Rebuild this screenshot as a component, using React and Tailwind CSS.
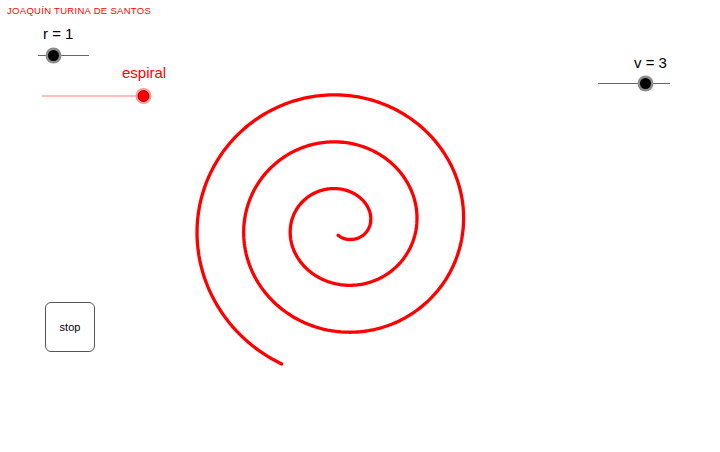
import React from "react";

function spiralPath() {
  const cx = 342, cy = 225.3;
  const pts = [];
  const start = -1.85, end = 16.875;
  const n = 900;
  for (let i = 0; i <= n; i++) {
    const t = start + ((end - start) * i) / n;
    const rx = 27.9 + 7.44 * t;
    const ry = 24.2 + 7.5 * t;
    const x = cx + rx * Math.cos(t);
    const y = cy - ry * Math.sin(t);
    pts.push(`${x.toFixed(2)},${y.toFixed(2)}`);
  }
  return "M" + pts.join(" L");
}

export default function App() {
  const d = spiralPath();
  return (
    <div className="relative w-[720px] h-[452px] bg-white overflow-hidden" style={{ fontFamily: '"Liberation Sans", Arial, sans-serif' }}>
      <svg className="absolute left-0 top-0" width="720" height="452" viewBox="0 0 720 452">
        {/* r slider */}
        <line x1="38" y1="55.5" x2="89" y2="55.5" stroke="#666666" strokeWidth="1" />
        <circle cx="53.5" cy="55.5" r="8" fill="#8c8c8c" />
        <circle cx="53.5" cy="55.5" r="5.5" fill="#000000" />
        {/* espiral slider */}
        <line x1="42" y1="96" x2="143" y2="96" stroke="#ff8080" strokeWidth="1.2" />
        <circle cx="143.5" cy="96" r="8" fill="#ff9a9a" />
        <circle cx="143.5" cy="96" r="5.5" fill="#ff0000" stroke="#7a0000" strokeWidth="0.8" />
        {/* v slider */}
        <line x1="598" y1="83.5" x2="670" y2="83.5" stroke="#666666" strokeWidth="1" />
        <circle cx="645.5" cy="83.5" r="8" fill="#8c8c8c" />
        <circle cx="645.5" cy="83.5" r="5.5" fill="#000000" />
        {/* spiral */}
        <path d={d} fill="none" stroke="#ff0000" strokeWidth="3.3" strokeLinecap="round" strokeLinejoin="round" />
      </svg>

      <div className="absolute left-[7px] top-[6px] text-[9.5px] leading-none text-[#ff0000] tracking-[0.3px]">
        JOAQUÍN TURINA DE SANTOS
      </div>
      <div className="absolute left-[43px] top-[26px] text-[15px] leading-none text-black">r = 1</div>
      <div className="absolute left-[122px] top-[65px] text-[15px] leading-none text-[#ff0000]">espiral</div>
      <div className="absolute left-[634px] top-[55px] text-[15px] leading-none text-black">v = 3</div>

      <button className="absolute left-[45px] top-[302px] w-[50px] h-[50px] rounded-[6px] border border-[#555555] bg-white text-[11px] text-black flex items-center justify-center">
        stop
      </button>
    </div>
  );
}
